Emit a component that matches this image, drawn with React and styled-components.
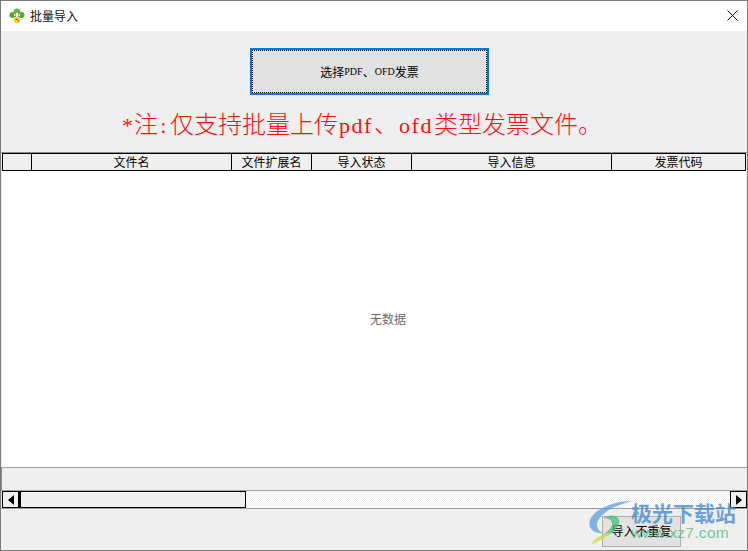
import React from "react";
import styled, { createGlobalStyle } from "styled-components";

const cjk = `"Noto Sans CJK SC", "Liberation Sans", sans-serif`;

const GlobalStyle = createGlobalStyle`
  html, body {
    margin: 0;
    padding: 0;
    background: #efefef;
  }
`;

const columns = [
  { title: "", width: 29 },
  { title: "文件名", width: 200 },
  { title: "文件扩展名", width: 80 },
  { title: "导入状态", width: 100 },
  { title: "导入信息", width: 200 },
  { title: "发票代码", width: 134 },
];

const AppIcon = () => (
  <svg width="16" height="16" viewBox="0 0 16 16">
    <circle cx="3.5" cy="7" r="3" fill="#5da33a" />
    <circle cx="12.5" cy="7" r="3" fill="#5da33a" />
    <circle cx="8" cy="4" r="3.4" fill="#6cb043" />
    <rect x="3" y="6" width="10" height="3" fill="#5da33a" />
    <rect x="7" y="5" width="2" height="4" fill="#ffffff" />
    <rect x="5" y="6" width="1.5" height="2" fill="#dff0cf" />
    <rect x="9.5" y="6" width="1.5" height="2" fill="#dff0cf" />
    <ellipse cx="8" cy="12" rx="3.2" ry="3" fill="#f2d20e" />
    <rect x="6.5" y="11" width="2" height="1" fill="#6b5a10" />
    <rect x="8.5" y="12.5" width="1.5" height="1" fill="#6b5a10" />
  </svg>
);

const CloseIcon = () => (
  <svg width="11" height="11" viewBox="0 0 11 11">
    <path d="M0.5 0.5 L10.5 10.5 M10.5 0.5 L0.5 10.5" stroke="#111" strokeWidth="1" fill="none" />
  </svg>
);

const ArrowIcon = ({ dir }) => (
  <svg width="6" height="10" viewBox="0 0 6 10">
    <path d={dir === "left" ? "M6 0 V10 L0 5 Z" : "M0 0 V10 L6 5 Z"} fill="#000" />
  </svg>
);

const Swirl = () => (
  <svg width="50" height="46" viewBox="0 0 50 46">
    <path
      d="M44 1 C26 1 6 8 1 20 C-2 29 6 34 14 33 C8 30 6 25 10 19 C16 10 30 4 44 1 Z"
      fill="#5b9fdc"
      opacity="0.75"
    />
    <path
      d="M14 18 C24 12 34 17 29 26 C26 32 16 38 3 42 C14 35 22 30 23 25 C24 20 19 18 14 18 Z"
      fill="#45b878"
      opacity="0.75"
    />
    <path d="M2 45 C6 38 14 34 22 32 C16 38 10 42 2 45 Z" fill="#e6e24a" opacity="0.75" />
  </svg>
);

const App = () => {
  return (
    <Window>
      <GlobalStyle />
      <TitleBar>
        <AppIcon />
        <TitleText>批量导入</TitleText>
        <CloseButton>
          <CloseIcon />
        </CloseButton>
      </TitleBar>

      <TopPanel>
        <PickButton>
          <PickLabel>
            选择<Latin>PDF</Latin>、<Latin>OFD</Latin>发票
          </PickLabel>
        </PickButton>
        <Notice>
          <NoticeLatin $width={12}>*</NoticeLatin>注<NoticeLatin $width={12}>:</NoticeLatin>仅支持批量上传
          <NoticeLatin $width={36}>pdf</NoticeLatin>、<NoticeLatin $width={36}>ofd</NoticeLatin>类型发票文件。
        </Notice>
      </TopPanel>

      <GridArea>
        <HeaderRow>
          {columns.map((col, i) => (
            <HeaderCell key={i} $width={col.width}>
              {col.title}
            </HeaderCell>
          ))}
        </HeaderRow>
        <GridBody>无数据</GridBody>
        <SummaryStrip />
        <ScrollBar>
          <ScrollButton>
            <ArrowIcon dir="left" />
          </ScrollButton>
          <ScrollThumb />
          <ScrollTrack />
          <ScrollButton>
            <ArrowIcon dir="right" />
          </ScrollButton>
        </ScrollBar>
      </GridArea>

      <Footer>
        <FooterButton>导入不重复</FooterButton>
      </Footer>

      <Watermark>
        <Swirl />
        <WatermarkText>
          <WatermarkName>极光下载站</WatermarkName>
          <WatermarkUrl>www.xz7.com</WatermarkUrl>
        </WatermarkText>
      </Watermark>
    </Window>
  );
};

const Window = styled.div`
  position: relative;
  box-sizing: border-box;
  width: 748px;
  height: 551px;
  display: flex;
  flex-direction: column;
  border: 1px solid #7a7a7a;
  background: #efefef;
  overflow: hidden;
  font-family: ${cjk};
  font-size: 12px;
  color: #000;
`;

const TitleBar = styled.div`
  flex: 0 0 30px;
  display: flex;
  align-items: center;
  gap: 5px;
  padding: 0 5px 0 8px;
  background: #fff;
`;

const TitleText = styled.span`
  flex: 1;
  line-height: 30px;
  color: #111;
`;

const CloseButton = styled.div`
  display: flex;
  margin-right: 4px;
  margin-top: -1px;
`;

const TopPanel = styled.div`
  flex: 0 0 121px;
  display: flex;
  flex-direction: column;
  align-items: center;
  padding-top: 17px;
  box-sizing: border-box;
`;

const PickButton = styled.div`
  box-sizing: border-box;
  width: 239px;
  height: 47px;
  margin-left: -9px;
  border: 2px solid #0078d7;
  background: #e1e1e1;
  display: flex;
`;

const PickLabel = styled.div`
  flex: 1;
  display: flex;
  align-items: center;
  justify-content: center;
  border: 1px dotted #000;
`;

const Latin = styled.span`
  font-family: "Liberation Serif", serif;
  font-size: 10px;
`;

const Notice = styled.div`
  margin-top: 13px;
  margin-left: -24px;
  font-size: 24px;
  font-weight: 300;
  line-height: 30px;
  color: #ff0d0d;
  white-space: nowrap;
`;

const NoticeLatin = styled.span`
  display: inline-block;
  width: ${(p) => p.$width}px;
  text-align: center;
  font-family: "Liberation Serif", serif;
  font-size: 22px;
  letter-spacing: 1.5px;
`;

const GridArea = styled.div`
  flex: 0 0 357px;
  display: flex;
  flex-direction: column;
  padding-left: 1px;
  border-top: 1px solid #8a8a8a;
  box-sizing: border-box;
`;

const HeaderRow = styled.div`
  flex: 0 0 18px;
  display: flex;
  box-sizing: border-box;
  width: 744px;
  border: 1px solid #000;
`;

const HeaderCell = styled.div`
  box-sizing: border-box;
  flex: 0 0 ${(p) => p.$width}px;
  line-height: 16px;
  text-align: center;
  border-right: 1px solid #000;
  &:last-child {
    border-right: none;
    flex: 1;
  }
`;

const GridBody = styled.div`
  flex: 1;
  width: 744px;
  box-sizing: border-box;
  padding: 0 0 2px 28px;
  display: flex;
  align-items: center;
  justify-content: center;
  background: #fff;
  color: #6d6d6d;
`;

const SummaryStrip = styled.div`
  flex: 0 0 23px;
  margin-left: -1px;
  box-sizing: border-box;
  border-top: 1px solid #a0a0a0;
  border-left: 1px solid #8a8a8a;
  background: #efefef;
`;

const ScrollBar = styled.div`
  flex: 0 0 19px;
  display: flex;
  box-sizing: border-box;
  margin-left: -1px;
  padding-left: 1px;
  border-top: 1px solid #a0a0a0;
  border-bottom: 1px solid #a0a0a0;
`;

const ScrollButton = styled.div`
  flex: 0 0 17px;
  box-sizing: border-box;
  display: flex;
  align-items: center;
  justify-content: center;
  border: 1px solid #000;
  background: #efefef;
`;

const ScrollThumb = styled.div`
  flex: 0 0 227px;
  box-sizing: border-box;
  border: 1px solid #000;
  border-left-width: 2px;
  background: #efefef;
`;

const ScrollTrack = styled.div`
  flex: 1;
  background: repeating-conic-gradient(#efefef 0 25%, #fff 0 50%) 0 0 / 2px 2px;
`;

const Footer = styled.div`
  flex: 1;
  display: flex;
  justify-content: flex-end;
  align-items: flex-start;
  padding: 7px 66px 0 0;
`;

const FooterButton = styled.div`
  box-sizing: border-box;
  width: 79px;
  height: 31px;
  padding-bottom: 2px;
  display: flex;
  align-items: center;
  justify-content: center;
  border: 1px solid #adadad;
  background: #e1e1e1;
`;

const Watermark = styled.div`
  position: absolute;
  right: 11px;
  bottom: 4px;
  display: flex;
  align-items: flex-start;
  pointer-events: none;
`;

const WatermarkText = styled.div`
  display: flex;
  flex-direction: column;
  margin-left: -8px;
`;

const WatermarkName = styled.div`
  font-size: 21px;
  font-weight: 700;
  line-height: 24px;
  color: rgba(62, 135, 205, 0.75);
  white-space: nowrap;
`;

const WatermarkUrl = styled.div`
  font-family: "Liberation Sans", sans-serif;
  font-size: 15.5px;
  line-height: 18px;
  letter-spacing: 0.3px;
  color: rgba(70, 185, 120, 0.75);
`;

export default App;
